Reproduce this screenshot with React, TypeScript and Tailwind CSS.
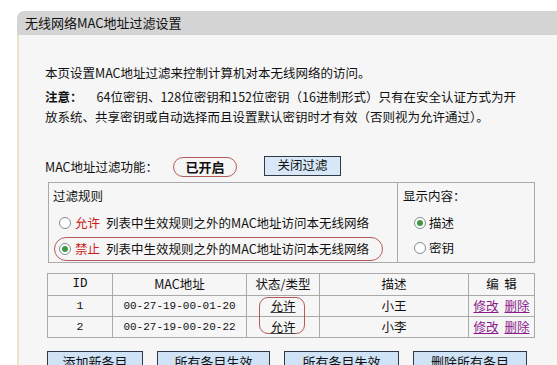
import React from 'react'

const cjk = { fontFamily: '"Noto Sans CJK SC", "Liberation Sans", sans-serif' }
const mono = { fontFamily: '"Liberation Mono", "Noto Sans CJK SC", monospace' }

function Radio({ checked }: { checked?: boolean }) {
  return (
    <span className="inline-flex w-[12px] h-[12px] rounded-full border border-[#7f8d99] bg-white items-center justify-center shrink-0">
      {checked && <span className="w-[6px] h-[6px] rounded-full bg-[#3f9a3f]" />}
    </span>
  )
}

const rows = [
  { id: '1', mac: '00-27-19-00-01-20', state: '允许', desc: '小王' },
  { id: '2', mac: '00-27-19-00-20-22', state: '允许', desc: '小李' },
]

export default function App() {
  return (
    <div className="min-h-screen bg-white pt-[11px] pl-[17px] text-[12.5px] text-[#111]" style={cjk}>
      {/* 标题栏 */}
      <div className="h-[24px] bg-[#d4d4d4] rounded-tl-[7px] flex items-center pl-[8px] text-[13px]">
        无线网络MAC地址过滤设置
      </div>

      {/* 内容区 */}
      <div className="bg-[#f6f6f6] border-l-2 border-[#ece2c8] pl-[26px] pt-[28px] h-[330px] whitespace-nowrap">
        <p className="leading-[20px]">本页设置MAC地址过滤来控制计算机对本无线网络的访问。</p>
        <p className="leading-[20px] mt-[4px]">
          <b className="font-bold">注意：</b>
          <span className="ml-[14px]">64位密钥、128位密钥和152位密钥（16进制形式）只有在安全认证方式为开</span>
          <br />
          放系统、共享密钥或自动选择而且设置默认密钥时才有效（否则视为允许通过）。
        </p>

        <div className="mt-[29px] h-[22px] flex items-center">
          <span className="w-[128px]">MAC地址过滤功能：</span>
          <span className="w-[64px] h-[20px] border-[1.5px] border-[#b55a5a] rounded-full flex items-center justify-center font-bold text-[13px]">
            已开启
          </span>
          <button className="ml-[27px] w-[77px] h-[20px] bg-[#d8e8f8] border border-[#2f3a44] flex items-center justify-center text-[12.5px] -mt-[3px]">
            关闭过滤
          </button>
        </div>

        {/* 过滤规则 / 显示内容 */}
        <div className="mt-[4px] ml-[3px] flex w-[487px] h-[81px] border border-[#a9a9a9]">
          <div className="w-[349px] border-r border-[#a9a9a9] pl-[4px] pt-[4px]">
            <div className="leading-[18px]">过滤规则</div>
            <div className="mt-[8px] h-[20px] flex items-center pl-[6px] gap-[4px]">
              <Radio />
              <span className="text-[#cc1a1a]">允许</span>
              <span className="ml-[2px]">列表中生效规则之外的MAC地址访问本无线网络</span>
            </div>
            <div className="mt-[4px] ml-[1px] w-[329px] h-[24px] border-[1.5px] border-[#b55a5a] rounded-full flex items-center pl-[4px] gap-[4px]">
              <Radio checked />
              <span className="text-[#cc1a1a]">禁止</span>
              <span className="ml-[2px]">列表中生效规则之外的MAC地址访问本无线网络</span>
            </div>
          </div>
          <div className="flex-1 pl-[5px] pt-[4px]">
            <div className="leading-[18px]">显示内容：</div>
            <div className="mt-[8px] h-[20px] flex items-center pl-[11px] gap-[3px]">
              <Radio checked />
              <span>描述</span>
            </div>
            <div className="mt-[5px] h-[20px] flex items-center pl-[11px] gap-[3px]">
              <Radio />
              <span>密钥</span>
            </div>
          </div>
        </div>

        {/* 列表 */}
        <table className="mt-[10px] ml-[2px] w-[488px] border-collapse border border-[#a9a9a9] text-center">
          <thead>
            <tr className="h-[22px]">
              <th className="w-[65px] border border-[#a9a9a9] font-normal" style={mono}>ID</th>
              <th className="w-[134px] border border-[#a9a9a9] font-normal">MAC地址</th>
              <th className="w-[73px] border border-[#a9a9a9] font-normal">状态/类型</th>
              <th className="w-[149px] border border-[#a9a9a9] font-normal">描述</th>
              <th className="border border-[#a9a9a9] font-normal">编&nbsp;&nbsp;辑</th>
            </tr>
          </thead>
          <tbody>
            {rows.map((r, i) => (
              <tr key={r.id} className="h-[21px]">
                <td className="border border-[#a9a9a9] text-[11.5px]" style={mono}>{r.id}</td>
                <td className="border border-[#a9a9a9] text-[11px]" style={mono}>{r.mac}</td>
                <td className="border border-[#a9a9a9] relative">
                  {i === 0 && (
                    <span className="absolute left-[12px] top-[1px] w-[46px] h-[37px] border-[1.5px] border-[#b55a5a] rounded-[9px]" />
                  )}
                  <span className="relative underline decoration-[#444]">{r.state}</span>
                </td>
                <td className="border border-[#a9a9a9]">{r.desc}</td>
                <td className="border border-[#a9a9a9]">
                  <span className="text-[#8b1a8b] underline">修改</span>
                  <span className="ml-[6px] text-[#8b1a8b] underline">删除</span>
                </td>
              </tr>
            ))}
          </tbody>
        </table>

        {/* 操作按钮 */}
        <div className="mt-[13px] ml-[2px] flex gap-[14px] text-[13px]">
          <button className="w-[96px] h-[22px] bg-[#cfe2f6] border border-[#2f3a44]">添加新条目</button>
          <button className="w-[113px] h-[22px] bg-[#cfe2f6] border border-[#2f3a44]">所有条目生效</button>
          <button className="w-[115px] h-[22px] bg-[#cfe2f6] border border-[#2f3a44]">所有条目失效</button>
          <button className="w-[114px] h-[22px] bg-[#cfe2f6] border border-[#2f3a44]">删除所有条目</button>
        </div>
      </div>
    </div>
  )
}
